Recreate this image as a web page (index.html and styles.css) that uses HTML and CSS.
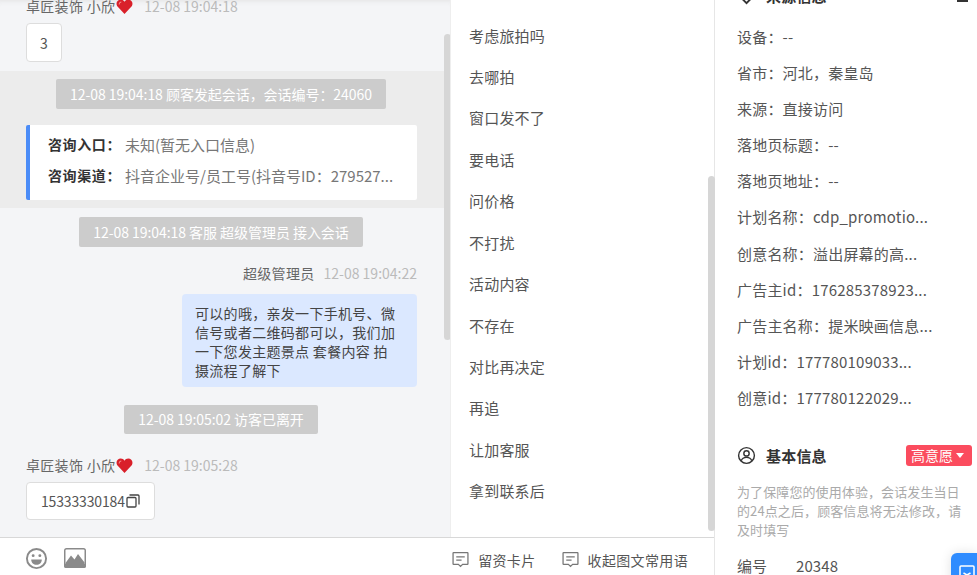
FILE: index.html
```html
<!DOCTYPE html>
<html lang="zh">
<head>
<meta charset="utf-8">
<title>会话</title>
<link rel="stylesheet" href="styles.css">
</head>
<body>
<div class="app">
  <section class="workspace">
    <div class="panes">
      <div class="chat">
        <div class="chat-flow">
          <div class="meta first"><span class="who">卓匠装饰 小欣</span><svg class="heart" viewBox="0 0 16 16"><path d="M8 15 1 7.500C-.5 4.500 1.500 1.500 4.500 1.500 6 1.500 7.300 2.300 8 3.500 8.700 2.300 10 1.500 11.500 1.500 14.500 1.500 16.500 4.500 15 7.500Z" fill="#d9202a"/><path d="M3 6C3 4.500 4 3.800 5 3.800" stroke="#f58a8a" fill="none"/></svg><span class="time">12-08 19:04:18</span></div>
          <div class="card tiny">3</div>
          <div class="band">
            <div class="notice">12-08 19:04:18 顾客发起会话，会话编号：24060</div>
            <div class="source">
              <div class="source-row"><b>咨询入口：</b><span>未知(暂无入口信息)</span></div>
              <div class="source-row"><b>咨询渠道：</b><span>抖音企业号/员工号(抖音号ID：279527...</span></div>
            </div>
          </div>
          <div class="notice join">12-08 19:04:18 客服 超级管理员 接入会话</div>
          <div class="meta right"><span class="who">超级管理员</span><span class="time">12-08 19:04:22</span></div>
          <div class="bubble-row"><div class="bubble">可以的哦，亲发一下手机号、微信号或者二维码都可以，我们加一下您发主题景点 套餐内容 拍摄流程了解下</div></div>
          <div class="notice leave">12-08 19:05:02 访客已离开</div>
          <div class="meta last"><span class="who">卓匠装饰 小欣</span><svg class="heart" viewBox="0 0 16 16"><path d="M8 15 1 7.500C-.5 4.500 1.500 1.500 4.500 1.500 6 1.500 7.300 2.300 8 3.500 8.700 2.300 10 1.500 11.500 1.500 14.500 1.500 16.500 4.500 15 7.500Z" fill="#d9202a"/><path d="M3 6C3 4.500 4 3.800 5 3.800" stroke="#f58a8a" fill="none"/></svg><span class="time">12-08 19:05:28</span></div>
          <div class="card phone">15333330184<svg class="copy" viewBox="0 0 14 14"><rect x="1" y="3.500" width="9" height="9.500" rx="1" fill="none" stroke="#444" stroke-width="1.300"/><path d="M3.500 1H12a1 1 0 0 1 1 1v8.500" fill="none" stroke="#444" stroke-width="1.300"/></svg></div>
        </div>
        <div class="thumb chat-thumb"></div>
      </div>
      <ul class="phrases">
        <li>考虑旅拍吗</li>
        <li>去哪拍</li>
        <li>窗口发不了</li>
        <li>要电话</li>
        <li>问价格</li>
        <li>不打扰</li>
        <li>活动内容</li>
        <li>不存在</li>
        <li>对比再决定</li>
        <li>再追</li>
        <li>让加客服</li>
        <li>拿到联系后</li>
        <li class="thumb phrase-thumb"></li>
      </ul>
    </div>
    <div class="toolbar">
      <svg class="tool smile" viewBox="0 0 24 24"><circle cx="12" cy="12" r="10" fill="none" stroke="#8a8a8a" stroke-width="2"/><circle cx="8.500" cy="9" r="1.500" fill="#8a8a8a"/><circle cx="15.500" cy="9" r="1.500" fill="#8a8a8a"/><path d="M6.500 13h11c0 3.500-2.500 5.500-5.500 5.500S6.500 16.500 6.500 13Z" fill="#8a8a8a"/></svg>
      <svg class="tool picture" viewBox="0 0 22 20"><rect width="22" height="20" rx="2.500" fill="#8a8a8a"/><rect x="1.500" y="1.500" width="19" height="17" rx="1" fill="#fff"/><path d="M1.500 15 7 7.500l3.500 4L14 6l6.500 8.500V18.500H1.500Z" fill="#8a8a8a"/><path d="M0 16h22v2a2 2 0 0 1-2 2H2a2 2 0 0 1-2-2Z" fill="#8a8a8a"/></svg>
      <span class="tool-gap"></span>
      <span class="action first-action"><svg class="msg" viewBox="0 0 16 16"><path d="M1.500 1.500h13a.5.500 0 0 1 .5.500v10a.5.500 0 0 1-.5.500H10L8 14.500 6 12.500H1.500A.5.500 0 0 1 1 12V2a.5.500 0 0 1 .5-.5Z" fill="none" stroke="#777" stroke-width="1.200"/><path d="M4 5.500h8M4 8.500h5" stroke="#777" stroke-width="1.200"/></svg>留资卡片</span>
      <span class="action"><svg class="msg" viewBox="0 0 16 16"><path d="M1.500 1.500h13a.5.500 0 0 1 .5.500v10a.5.500 0 0 1-.5.500H10L8 14.500 6 12.500H1.500A.5.500 0 0 1 1 12V2a.5.500 0 0 1 .5-.5Z" fill="none" stroke="#777" stroke-width="1.200"/><path d="M4 5.500h8M4 8.500h5" stroke="#777" stroke-width="1.200"/></svg>收起图文常用语</span>
    </div>
  </section>
  <aside class="info">
    <div class="info-head clipped"><svg class="head-icon" viewBox="0 0 20 20"><path d="M10 18 2 10V2h16v8Z" fill="none" stroke="#333" stroke-width="2"/></svg><b>来源信息</b><i class="clip-mark"></i></div>
    <ul class="fields">
      <li>设备：--</li>
      <li>省市：河北，秦皇岛</li>
      <li>来源：直接访问</li>
      <li>落地页标题：--</li>
      <li>落地页地址：--</li>
      <li>计划名称：cdp_promotio...</li>
      <li>创意名称：溢出屏幕的高...</li>
      <li>广告主id：176285378923...</li>
      <li>广告主名称：提米映画信息...</li>
      <li>计划id：177780109033...</li>
      <li>创意id：177780122029...</li>
    </ul>
    <div class="info-head basic">
      <svg class="head-icon" viewBox="0 0 20 20"><circle cx="10" cy="10" r="8.300" fill="none" stroke="#333" stroke-width="1.500"/><circle cx="10" cy="7.800" r="2.800" fill="none" stroke="#333" stroke-width="1.500"/><path d="M4.500 15.500c.8-2.500 3-3.500 5.500-3.500s4.700 1 5.500 3.500" fill="none" stroke="#333" stroke-width="1.500"/></svg>
      <b>基本信息</b>
      <span class="intent">高意愿<i class="caret"></i></span>
    </div>
    <p class="hint">为了保障您的使用体验，会话发生当日<br>的24点之后，顾客信息将无法修改，请<br>及时填写</p>
    <div class="number"><span>编号</span><span>20348</span></div>
    <div class="float-btn"><svg viewBox="0 0 16 16"><rect x="1" y="1" width="14" height="14" rx="1" fill="none" stroke="#fff" stroke-width="1.500"/><path d="M4.500 8 8 10l3.500-2" fill="none" stroke="#fff" stroke-width="1.500"/></svg></div>
  </aside>
</div>
</body>
</html>
```
FILE: styles.css
```css
* { box-sizing: border-box; }
html, body { margin: 0; height: 100%; overflow: hidden; }
body {
  font-family: "Noto Sans CJK SC", "Open Sans", sans-serif;
  font-size: 14px;
  color: #555;
  background: #fff;
}
ul { list-style: none; margin: 0; padding: 0; }
.app { display: grid; grid-template-columns: 715px 262px; height: 575px; }
.workspace { display: flex; flex-direction: column; height: 575px; border-right: 1px solid #e6e6e6; }
.panes { display: flex; flex: none; height: 538px; border-bottom: 1px solid #d8d8d8; }
.chat { position: relative; width: 451px; background: #f4f5f7; overflow: hidden; border-right: 1px solid #eee; box-shadow: inset 0 6px 6px -6px #ddd; }
.chat-flow { width: 442px; margin-top: -4px; }
.meta { display: flex; align-items: center; height: 20px; padding: 0 25px 0 26px; line-height: 20px; }
.meta.first { margin-bottom: 7px; }
.meta.right { justify-content: flex-end; margin-top: 16px; }
.meta.right .time { margin-left: 9px; }
.meta.last { margin-top: 21px; }
.who { color: #666; letter-spacing: .3px; }
.time { color: #bbb; margin-left: 11px; }
.heart { width: 17px; height: 17px; margin-left: 1px; }
.card { display: inline-flex; align-items: center; justify-content: center; margin-left: 26px; background: #fff; border: 1px solid #ddd; border-radius: 4px; }
.tiny { display: flex; width: 36px; height: 39px; }
.band { margin: 9px -2px 0 0; height: 137px; padding: 8px 2px 0 0; background: #ececec; }
.notice { margin: 0 auto; width: max-content; padding: 0 14px; height: 30px; line-height: 30px; background: #ccc; color: #fff; border-radius: 2px; letter-spacing: -.05px; }
.source { margin: 16px 0 0 26px; width: 391px; height: 75px; background: #fff; border-left: 4px solid #4b8cf7; border-radius: 2px; padding: 4px 0 0 18px; font-size: 15px; }
.source-row { display: flex; height: 31px; line-height: 31px; white-space: nowrap; }
.source-row b { width: 77px; font-size: 14px; color: #333; font-weight: 700; letter-spacing: .6px; }
.source-row span { color: #777; }
.join { margin-top: 9px; }
.bubble-row { display: flex; justify-content: flex-end; padding-right: 25px; margin-top: 11px; }
.bubble { width: 235px; height: 93px; padding: 10px 18px 10px 13px; background: #dbe8ff; border-radius: 4px; line-height: 19px; color: #444; letter-spacing: .3px; }
.leave { margin-top: 18px; height: 29px; line-height: 29px; }
.phone { margin-top: 7px; height: 38px; padding: 0 14px; color: #555; letter-spacing: -.15px; }
.copy { width: 14px; height: 14px; margin-left: 1px; }
.thumb { position: absolute; width: 7px; background: #d6d6d6; border-radius: 4px; }
.chat-thumb { top: 34px; left: 444px; height: 306px; }
.phrases { position: relative; flex: 1; padding-left: 18px; padding-top: 14.500px; font-size: 15px; color: #555; }
.phrases li { height: 41.450px; line-height: 41.450px; letter-spacing: .2px; }
.phrases .phrase-thumb { top: 176px; left: 257px; height: 355px; }
.toolbar { display: flex; align-items: center; flex: 1; padding: 3px 0 0 25px; }
.tool { flex: none; }
.smile { width: 23px; height: 23px; }
.picture { width: 22px; height: 20px; margin-left: 16px; }
.tool-gap { flex: 1; }
.action { display: inline-flex; align-items: center; margin-right: 26px; padding-top: 3px; color: #555; letter-spacing: .35px; }
.first-action { margin-right: 26px; }
.msg { width: 17px; height: 17px; margin-right: 9px; }
.info { position: relative; padding: 0 0 0 22px; overflow: hidden; }
.info-head { display: flex; align-items: center; color: #333; font-size: 15px; }
.info-head b { font-weight: 700; letter-spacing: .2px; margin-left: 10px; }
.clipped { height: 20px; margin-top: -15px; }
.clip-mark { margin: 12px 9px 0 auto; width: 11px; height: 2px; background: #333; }
.head-icon { width: 19px; height: 19px; flex: none; }
.fields { margin-top: 14px; font-size: 15px; }
.fields li { height: 36.100px; line-height: 36.100px; white-space: nowrap; color: #555; letter-spacing: .2px; }
.basic { margin-top: 27px; height: 24px; padding-right: 5px; }
.intent { margin-left: auto; width: 66px; height: 21px; line-height: 21px; font-size: 14px; background: #fb4c5e; color: #fff; border-radius: 3px; padding-left: 5px; display: flex; align-items: center; }
.caret { margin-left: 3px; border: 4px solid transparent; border-top: 5px solid #fff; border-bottom: 0; }
.hint { margin: 15px 0 0; font-size: 13px; line-height: 19px; color: #aaa; letter-spacing: .1px; white-space: nowrap; }
.number { display: flex; margin-top: 16px; line-height: 22px; font-size: 15px; letter-spacing: .1px; }
.number span:first-child { width: 59px; }
.float-btn { position: absolute; right: 0; top: 553px; width: 26px; height: 40px; background: #2f8cff; border-radius: 6px 0 0 6px; box-shadow: 0 0 12px rgba(0,0,0,.12); padding: 12px 0 0 8px; }
.float-btn svg { width: 16px; height: 16px; display: block; }
```
